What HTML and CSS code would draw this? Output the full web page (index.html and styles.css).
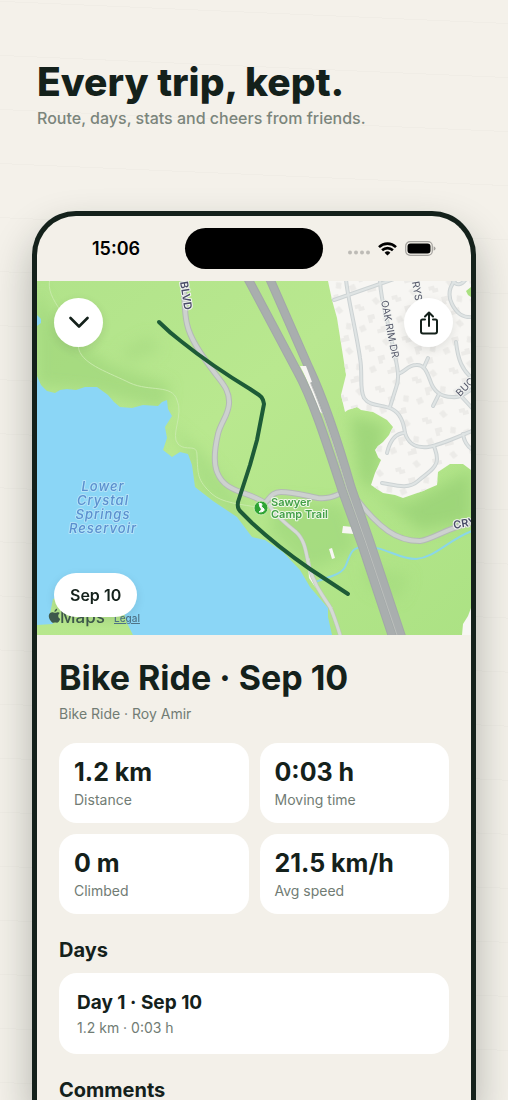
FILE: index.html
```html
<!DOCTYPE html>
<html lang="en">
<head>
    <meta charset="UTF-8">
    <title>Every trip, kept.</title>
    <meta name="viewport" content="width=device-width, initial-scale=1.0">
    <link rel="stylesheet" href="styles.css">
</head>
<body>
    <header class="intro">
        <h1>Every trip, kept.</h1>
        <p>Route, days, stats and cheers from friends.</p>
    </header>

    <main class="phone">
        <div class="status-bar">
            <span class="time">15:06</span>
            <span class="island"></span>
            <span class="status-icons">
                <svg width="22" height="5" viewBox="0 0 22 5" fill="#bdbbb6">
                    <circle cx="2" cy="2.5" r="2"/><circle cx="8" cy="2.5" r="2"/><circle cx="14" cy="2.5" r="2"/><circle cx="20" cy="2.5" r="2"/>
                </svg>
                <svg width="19" height="14" viewBox="0 0 19 14" fill="none" stroke="#000" stroke-width="2.6">
                    <path d="M1 5.1 A12.2 12.2 0 0 1 18 5.1"/>
                    <path d="M4.1 8.3 A7.8 7.8 0 0 1 14.9 8.3"/>
                    <path d="M9.5 13.6 L6.6 10.7 A4.2 4.2 0 0 1 12.4 10.7 Z" fill="#000" stroke="none"/>
                </svg>
                <svg width="31" height="15" viewBox="0 0 31 15">
                    <rect x="0.7" y="0.7" width="26.6" height="13.6" rx="4.4" fill="none" stroke="#a3a19d" stroke-width="1.2"/>
                    <rect x="2.5" y="2.5" width="23" height="10" rx="3" fill="#000"/>
                    <path d="M28.7 5.2 Q30.6 6 30.6 7.5 Q30.6 9 28.7 9.8 Z" fill="#a3a19d"/>
                </svg>
            </span>
        </div>

        <section class="map">
            <svg class="map-canvas" viewBox="37 281 434 354" role="img" aria-label="Route map">
                <defs>
                    <linearGradient id="land" x1="0" y1="0" x2="1" y2="1">
                        <stop offset="0" stop-color="#b1e38a"/>
                        <stop offset="0.4" stop-color="#b9e88f"/>
                        <stop offset="1" stop-color="#ace284"/>
                    </linearGradient>
                    <filter id="soft" x="-30%" y="-30%" width="160%" height="160%">
                        <feGaussianBlur stdDeviation="7"/>
                    </filter>
                    <pattern id="houses" width="38" height="42" patternUnits="userSpaceOnUse" patternTransform="rotate(-14)">
                        <g fill="#ecebe8">
                            <path d="M4 4h6v3h3v4h-6v-3h-3z"/>
                            <path d="M22 3l5-2 3 6-5 2z"/>
                            <path d="M14 17h7v5h-3v3h-4z"/>
                            <path d="M30 19l5 2-2 6-5-2z"/>
                            <path d="M3 26l6-1 1 6-6 1z"/>
                            <path d="M20 33h4v-2h5v6h-9z"/>
                        </g>
                    </pattern>
                    <path id="town" d="M328 281 L332 300 L337 318 L346 375 L341 395 L345 412 L348 410 L357 407 L361 410 L373 412 L387 420 L393 427 L389 435 L383 442 L378 446 L375 450 L378 457 L381 460 L375 473 L371 485 L383 493 L395 495 L403 498 L423 491 L437 485 L438 472 L450 464 L463 464 L471 470 V281 Z"/>
                    <path id="blvd" d="M183 275 C185 300 184 312 187 324 C190 338 200 353 214 372 C222 383 230 390 229 404 C228 416 221 422 218 434 C215 447 213 462 217 472 C222 485 232 489 243 493 C252 496 258 498 265 503 C270 498 272 492 281 492 C292 492 303 495 318 498 C330 499 334 496 344 492"/>
                    <path id="canyon" d="M355 497 C365 510 375 522 388 531 C398 538 408 541 420 541 C434 539 446 528 474 522"/>
                    <path id="trail" d="M268 503 C274 514 285 523 296 532 C306 541 306 555 309 566 C313 582 320 592 330 607 C334 615 337 625 341 638"/>
                    <g id="streets">
                        <path d="M346 279 C347 295 356 330 360 358 C363 375 359 388 364 398 C370 407 382 404 392 409 C402 414 404 425 405 433 C409 446 418 448 428 447 C440 445 455 438 472 431"/>
                        <path d="M334 300 L394 279"/>
                        <path d="M380 279 C380 300 388 320 392 342 C396 362 401 376 396 388 L390 407"/>
                        <path d="M398 374 C405 372 408 365 416 365 C424 364 427 372 430 380 C434 393 442 397 452 397 C461 398 466 393 472 389"/>
                        <path d="M428 358 L424 367"/>
                        <path d="M439 394 L433 406"/>
                        <path d="M456 342 C458 360 462 370 473 379"/>
                        <path d="M456 279 C449 287 448 296 452 304 C457 314 463 318 473 317"/>
                        <path d="M452 279 C456 287 462 285 466 279"/>
                        <path d="M405 433 C396 433 390 440 387 453"/>
                        <path d="M382 483 C395 485 408 490 418 481 C426 474 437 468 437 459 C437 453 435 450 434 446"/>
                        <path d="M463 434 C464 441 468 447 473 450"/>
                        <path d="M461 396 L473 409"/>
                    </g>
                </defs>

                <!-- land and relief -->
                <rect x="37" y="281" width="434" height="354" fill="url(#land)"/>
                <g filter="url(#soft)">
                    <path d="M37 290 L60 330 L110 365 L170 385 L165 410 L90 390 L37 385 Z" fill="#9cd478" opacity="0.6"/>
                    <path d="M120 350 L150 335 L160 350 L130 362 Z" fill="#a3d880" opacity="0.5"/>
                    <path d="M350 415 L385 425 L375 490 L405 505 L471 470 V520 L420 530 L360 480 Z" fill="#94ce72" opacity="0.65"/>
                    <path d="M275 500 L345 505 L355 550 L310 570 L270 530 Z" fill="#9dd579" opacity="0.6"/>
                    <path d="M360 565 L410 575 L400 600 L370 590 Z" fill="#a2da7e" opacity="0.5"/>
                    <path d="M165 420 L185 450 L200 490 L250 530 L240 500 L200 450 Z" fill="#a4da80" opacity="0.7"/>
                </g>
                <path d="M50 279 C44 300 75 320 79 350 C84 365 110 373 130 383 C150 392 172 384 177 400 C184 415 170 435 178 444 C186 452 197 443 197 455 C198 475 197 480 212 494 C222 503 240 504 262 508" fill="none" stroke="#c8eaab" stroke-width="1"/>

                <!-- water -->
                <path fill="#8bd6f6" d="M37 376 L41 385 L47 391 L55 393 L60 390 L67 389 L76 390 L85 387 L97 387 L108 395 L114 402 L120 407 L132 408 L143 405 L158 406 L162 402 L167 400 L168 409 L172 416 L165 427 L167 438 L163 450 L172 457 L180 452 L188 454 L192 465 L195 487 L213 501 L237 517 L252 537 L265 540 L283 552 L300 570 L310 587 L328 608 L328 617 L332 635 H133 L127 623 L122 606 L105 592 L75 590 L53 599 L50 614 L53 624 L37 625 Z"/>
                <path d="M37 315 L41 319 L41 323 L37 326 Z" fill="#8bd6f6"/>
                <path d="M316 582 C325 577 342 576 346 565 C351 552 352 547 365 547 C385 546 397 559 416 559 C436 557 448 540 472 531" fill="none" stroke="#8bd6e8" stroke-width="2"/>

                <!-- neighbourhood -->
                <use href="#town" fill="#f7f6f3"/>
                <use href="#town" fill="url(#houses)"/>
                <path d="M471 287 L466 291 L468 295 L471 297 Z" fill="#a9e080"/>
                <path d="M471 608 L468 616 L463 624 L462 635 H471 Z" fill="#f7f6f3"/>
                <path d="M343 526 L353 527 L354 534 L342 533 Z M329 549 L332 548 L335 558 L332 559 Z M307 553 L310 560 L311 575 L331 606 L333 608 L328 606 L309 578 Z" fill="#f7f6f3"/>
                <g fill="none" stroke-linecap="round">
                    <use href="#streets" stroke="#cdd3d4" stroke-width="4"/>
                    <use href="#streets" stroke="#dfe4e4" stroke-width="2"/>
                </g>

                <!-- roads -->
                <g fill="none">
                    <use href="#trail" stroke="#bbc3bb" stroke-width="4"/>
                    <use href="#trail" stroke="#d6dad6" stroke-width="3"/>
                    <use href="#blvd" stroke="#b3b9b5" stroke-width="6"/>
                    <use href="#blvd" stroke="#cdd1cf" stroke-width="4"/>
                    <use href="#canyon" stroke="#b3b9b5" stroke-width="6"/>
                    <use href="#canyon" stroke="#cdd1cf" stroke-width="4"/>
                    <path d="M301 366 L309 366 L324 415 L320 412 Z" fill="#f7f6f3"/>
                    <g stroke="#a2a8a8" stroke-width="9">
                        <path d="M247 277 L297 371 C312 398 325 438 342 490 L362 545 L393 638"/>
                        <path d="M269 277 L309 368 C324 400 338 442 351 487 L370 542 L402 638"/>
                    </g>
                    <g stroke="#a9aeae" stroke-width="7">
                        <path d="M247 277 L297 371 C312 398 325 438 342 490 L362 545 L393 638"/>
                        <path d="M269 277 L309 368 C324 400 338 442 351 487 L370 542 L402 638"/>
                    </g>
                    <path d="M304 368 C319 400 333 442 347 489 L366 543 L398 638" stroke="#bcbfbd" stroke-width="1"/>
                    <path d="M300 366 L306 366 L312 382 L309 383 Z" fill="#f7f6f3"/>
                </g>

                <!-- labels -->
                <g class="street-label">
                    <text transform="translate(180 282) rotate(81)">BLVD</text>
                    <text class="minor" transform="translate(381 301) rotate(79)">OAK RIM DR</text>
                    <text class="minor" transform="translate(412 282) rotate(80)">RYS</text>
                    <text class="minor" transform="translate(460 397) rotate(-45)">BUC</text>
                    <text transform="translate(454 529) rotate(-10)">CRY</text>
                </g>
                <g class="water-label">
                    <text x="103" y="491">Lower</text>
                    <text x="103" y="505">Crystal</text>
                    <text x="103" y="519">Springs</text>
                    <text x="103" y="533">Reservoir</text>
                </g>
                <circle cx="261" cy="508" r="7" fill="#2fa435" stroke="#c9ecb2" stroke-width="1"/>
                <path d="M259 503 L262 504 Q260 507 264 509 Q265 512 259 512 Q263 510 260 507 Z" fill="#fff" stroke="#fff" stroke-width="1"/>
                <g class="place-label">
                    <text x="271" y="506">Sawyer</text>
                    <text x="271" y="518">Camp Trail</text>
                </g>

                <path class="route" d="M159 322 Q170 333 182 342 Q212 366 250 389 L259 395 Q262 397 263 400 L264 404 L257 440 L250 465 L238 502 Q237 508 240 511 L252 523 Q278 547 310 569 L348 594"/>

                <g class="map-credit">
                    <path d="M56.700 612.500 C57.800 612 59 611.900 59.700 613 C57.600 614.500 57.800 617.700 60.200 618.900 C59.400 621.300 58 622.900 56.900 622.800 C55.800 622.300 55 622.200 53.800 622.800 C51.800 623.400 48.500 618.800 48.800 615.500 C49.200 612.700 51.700 611.700 53.500 612.400 C54.900 612.900 55.500 612.900 56.700 612.500 Z M54.500 611.900 C54.300 610.200 55.600 608.800 57.200 608.500 C57.300 610.300 56.200 611.700 54.500 611.900 Z"/>
                    <text class="brand" x="60" y="623">Maps</text>
                    <a href="#legal"><text class="legal" x="114" y="622">Legal</text></a>
                </g>
            </svg>

            <div class="map-controls">
                <button class="round-button" aria-label="Close">
                    <svg width="20" height="13" viewBox="0 0 20 13" fill="none" stroke="#14211b" stroke-width="2.6" stroke-linecap="round" stroke-linejoin="round">
                        <path d="M1.500 2 L10 10.500 L18.500 2"/>
                    </svg>
                </button>
                <button class="round-button" aria-label="Share">
                    <svg width="20" height="24" viewBox="0 0 20 24" fill="none" stroke="#14211b" stroke-width="2" stroke-linecap="round" stroke-linejoin="round">
                        <path d="M6 8.500 H3.500 Q2 8.500 2 10 V20.500 Q2 22.500 4 22.500 H16 Q18 22.500 18 20.500 V10 Q18 8.500 16.500 8.500 H14"/>
                        <path d="M10 15 V2 M6 5.500 L10 1.500 L14 5.500"/>
                    </svg>
                </button>
            </div>
            <span class="date-pill">Sep 10</span>
        </section>

        <section class="trip">
            <h2 class="trip-title">Bike Ride · Sep 10</h2>
            <p class="trip-meta">Bike Ride · Roy Amir</p>

            <dl class="stats">
                <div class="card stat">
                    <dt>Distance</dt>
                    <dd>1.2 km</dd>
                </div>
                <div class="card stat">
                    <dt>Moving time</dt>
                    <dd>0:03 h</dd>
                </div>
                <div class="card stat">
                    <dt>Climbed</dt>
                    <dd>0 m</dd>
                </div>
                <div class="card stat">
                    <dt>Avg speed</dt>
                    <dd>21.5 km/h</dd>
                </div>
            </dl>

            <h3>Days</h3>
            <article class="card day">
                <h4>Day 1 · Sep 10</h4>
                <p>1.2 km · 0:03 h</p>
            </article>

            <h3>Comments</h3>
        </section>
    </main>
</body>
</html>
```
FILE: styles.css
```css
* {
    box-sizing: border-box;
}
body {
    margin: 0;
    height: 100vh;
    overflow: hidden;
    font-family: "Inter", sans-serif;
    color: #14211b;
    background: #f4f1ea repeating-linear-gradient(182.5deg, transparent 0 23px, #f0ede6 23px 24px, transparent 24px 54px);
}
h1, h2, h3, h4, p, dl, dd {
    margin: 0;
}

.intro {
    padding: 59px 37px 81px;
}
.intro h1 {
    font-size: 39px;
    line-height: 45px;
    font-weight: 800;
}
.intro p {
    margin-top: 2px;
    font-size: 16px;
    line-height: 24px;
    font-weight: 500;
    color: #7b857c;
}

.phone {
    margin: 0 32px;
    border: 5px solid #14211b;
    border-bottom: 0;
    border-radius: 44px 44px 0 0;
    background: #f3f0e9;
    box-shadow: 0 20px 40px rgba(20, 33, 27, 0.3);
}

.status-bar {
    display: grid;
    grid-template-columns: 1fr 138px 1fr;
    align-items: center;
    justify-items: center;
    padding: 12px 0;
}
.time {
    padding-left: 10px;
    font-size: 18px;
    font-weight: 600;
    color: #000;
}
.island {
    width: 138px;
    height: 41px;
    border-radius: 21px;
    background: #000;
}
.status-icons {
    display: flex;
    align-items: center;
    gap: 8px;
    padding-right: 10px;
}
.status-icons svg:first-child {
    margin-top: 8px;
}

/* map */
.map {
    position: relative;
    overflow: hidden;
}
.map-canvas {
    display: block;
    width: 100%;
}
.map-controls {
    position: absolute;
    top: 17px;
    left: 17px;
    right: 18px;
    display: flex;
    justify-content: space-between;
}
.round-button {
    display: flex;
    align-items: center;
    justify-content: center;
    width: 49px;
    height: 49px;
    padding: 0;
    border: 0;
    border-radius: 50%;
    background: #fff;
    box-shadow: 0 3px 10px rgba(20, 33, 27, 0.1);
}
.date-pill {
    position: absolute;
    left: 17px;
    bottom: 18px;
    padding: 10px 16px;
    border-radius: 22px;
    background: #fff;
    font-size: 16px;
    line-height: 24px;
    font-weight: 600;
    box-shadow: 0 3px 10px rgba(20, 33, 27, 0.1);
}
.route {
    fill: none;
    stroke: #1d5b37;
    stroke-width: 4;
    stroke-linecap: round;
    stroke-linejoin: round;
}
.street-label text,
.water-label text,
.place-label text {
    paint-order: stroke;
    stroke-width: 2px;
    stroke-linejoin: round;
}
.street-label text {
    font-size: 11px;
    font-weight: 600;
    fill: #4a4d68;
    stroke: #f1f3f0;
}
.street-label .minor {
    font-size: 10px;
    font-weight: 400;
    fill: #55586a;
}
.water-label text {
    font-size: 13px;
    font-style: italic;
    font-weight: 500;
    letter-spacing: 1px;
    text-anchor: middle;
    fill: #5b90cf;
    stroke: #b4e3f8;
}
.place-label text {
    font-size: 11px;
    font-weight: 600;
    fill: #43a047;
    stroke: #f0f9e8;
}
.map-credit {
    fill: #3f5a4c;
}
.brand {
    font-size: 17px;
    font-weight: 500;
}
.legal {
    font-size: 10px;
    font-weight: 500;
    fill: #4f7488;
    text-decoration: underline;
}

/* trip details */
.trip {
    padding: 22px 22px 0;
}
.trip-title {
    font-size: 34px;
    line-height: 42px;
    font-weight: 700;
}
.trip-meta {
    margin-top: 5px;
    font-size: 14px;
    line-height: 20px;
    color: #717c74;
}
.card {
    border-radius: 18px;
    background: #fff;
}
.stats {
    display: grid;
    grid-template-columns: 1fr 1fr;
    gap: 11px;
    margin-top: 19px;
}
.stat {
    display: flex;
    flex-direction: column-reverse;
    padding: 13px 15px;
}
.stat dt,
.day p {
    font-size: 14px;
    line-height: 20px;
    color: #717c74;
}
.stat dd {
    margin-bottom: 2px;
    font-size: 25px;
    line-height: 32px;
    font-weight: 700;
}
.trip h3 {
    margin: 24px 0 10px;
    font-size: 20px;
    line-height: 25px;
    font-weight: 700;
}
.day {
    padding: 17px 18px 16px;
}
.day h4 {
    margin-bottom: 2px;
    font-size: 19px;
    line-height: 26px;
    font-weight: 700;
}
```
